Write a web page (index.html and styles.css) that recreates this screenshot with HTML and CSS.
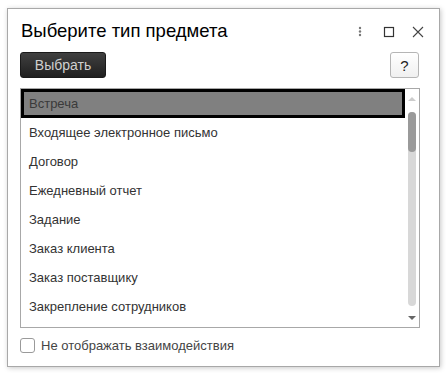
FILE: index.html
```html
<!DOCTYPE html>
<html lang="ru">
<head>
<meta charset="utf-8">
<link rel="stylesheet" href="styles.css">
</head>
<body>
<div class="window">
  <div class="header">
    <div class="title">Выберите тип предмета</div>
    <div class="win-icons">
      <svg class="ico" width="14" height="14" viewBox="0 0 14 14"><circle cx="7" cy="3" r="1.2" fill="#777"/><circle cx="7" cy="6.5" r="1.2" fill="#777"/><circle cx="7" cy="10" r="1.2" fill="#777"/></svg>
      <svg class="ico" width="14" height="14" viewBox="0 0 14 14"><rect x="2.5" y="2.5" width="9" height="9" fill="none" stroke="#333" stroke-width="1.2"/></svg>
      <svg class="ico" width="14" height="14" viewBox="0 0 14 14"><path d="M2 2 L12 12 M12 2 L2 12" stroke="#444" stroke-width="1.1" fill="none"/></svg>
    </div>
  </div>
  <div class="toolbar">
    <button class="btn-primary">Выбрать</button>
    <button class="btn-help">?</button>
  </div>
  <div class="list">
    <div class="rows">
      <div class="row selected">Встреча</div>
      <div class="row">Входящее электронное письмо</div>
      <div class="row">Договор</div>
      <div class="row">Ежедневный отчет</div>
      <div class="row">Задание</div>
      <div class="row">Заказ клиента</div>
      <div class="row">Заказ поставщику</div>
      <div class="row">Закрепление сотрудников</div>
    </div>
    <div class="scrollbar">
      <div class="arrow up"></div>
      <div class="track"><div class="thumb"></div></div>
      <div class="arrow down"></div>
    </div>
  </div>
  <label class="check">
    <span class="box"></span>
    <span class="check-label">Не отображать взаимодействия</span>
  </label>
</div>
</body>
</html>
```
FILE: styles.css
```css
html, body {
  margin: 0;
  background: #fff;
}
body {
  padding: 8px 7px;
  font-family: Arial, "Liberation Sans", sans-serif;
}
.window {
  box-sizing: border-box;
  width: 433px;
  height: 359px;
  border: 1px solid #a8a8a8;
  box-shadow: 1px 1px 5px rgba(0, 0, 0, 0.22);
  background: #fff;
  padding: 0 19px 0 12px;
  display: flex;
  flex-direction: column;
}
.header {
  display: flex;
  align-items: center;
  justify-content: space-between;
  height: 43px;
  padding-top: 1px;
  box-sizing: border-box;
}
.title {
  font-size: 18.5px;
  color: #000;
  padding-left: 1px;
}
.win-icons {
  display: flex;
  gap: 15px;
  margin-right: -5px;
  margin-top: 2px;
}
.ico { display: block; }
.toolbar {
  display: flex;
  justify-content: space-between;
  height: 26px;
}
.btn-primary {
  box-sizing: border-box;
  width: 86px;
  height: 26px;
  border: 1px solid #1a1a1a;
  border-radius: 3px;
  background: linear-gradient(#404040, #1f1f1f);
  color: #d0d0d0;
  font-family: Arial, "Liberation Sans", sans-serif;
  font-size: 14px;
  padding: 0;
}
.btn-help {
  box-sizing: border-box;
  width: 29px;
  height: 26px;
  border: 1px solid #b5b5b5;
  border-radius: 3px;
  background: linear-gradient(#ffffff, #f0f0f0);
  color: #222;
  font-family: Arial, "Liberation Sans", sans-serif;
  font-size: 15px;
  padding: 0;
  margin-right: 1px;
}
.list {
  margin-top: 10px;
  box-sizing: border-box;
  width: 400px;
  height: 240px;
  border: 1px solid #a8a8a8;
  display: flex;
}
.rows {
  flex: 1;
}
.row {
  box-sizing: border-box;
  height: 29px;
  padding-left: 8px;
  display: flex;
  align-items: center;
  font-size: 13px;
  color: #333;
}
.row.selected {
  background: #808080;
  border: 3px solid #000;
  padding-left: 5px;
  color: #3a3a3a;
}
.scrollbar {
  width: 14px;
  display: flex;
  flex-direction: column;
  align-items: center;
}
.arrow {
  width: 0;
  height: 0;
  border-left: 4px solid transparent;
  border-right: 4px solid transparent;
}
.arrow.up {
  border-bottom: 4px solid #ccc;
  margin-top: 8px;
  margin-bottom: 11px;
}
.arrow.down {
  border-top: 4px solid #666;
  margin-top: 10px;
  margin-bottom: 7px;
}
.track {
  flex: 1;
  width: 8px;
  background: #d8d8d8;
  border-radius: 4px;
}
.thumb {
  height: 40px;
  background: #9a9a9a;
  border-radius: 4px;
}
.check {
  display: flex;
  align-items: center;
  gap: 6px;
  margin-top: 10px;
  padding-left: 0;
}
.box {
  box-sizing: border-box;
  width: 15px;
  height: 15px;
  border: 1px solid #9a9a9a;
  border-radius: 3px;
  background: #fff;
}
.check-label {
  font-size: 13px;
  color: #444;
}
```
